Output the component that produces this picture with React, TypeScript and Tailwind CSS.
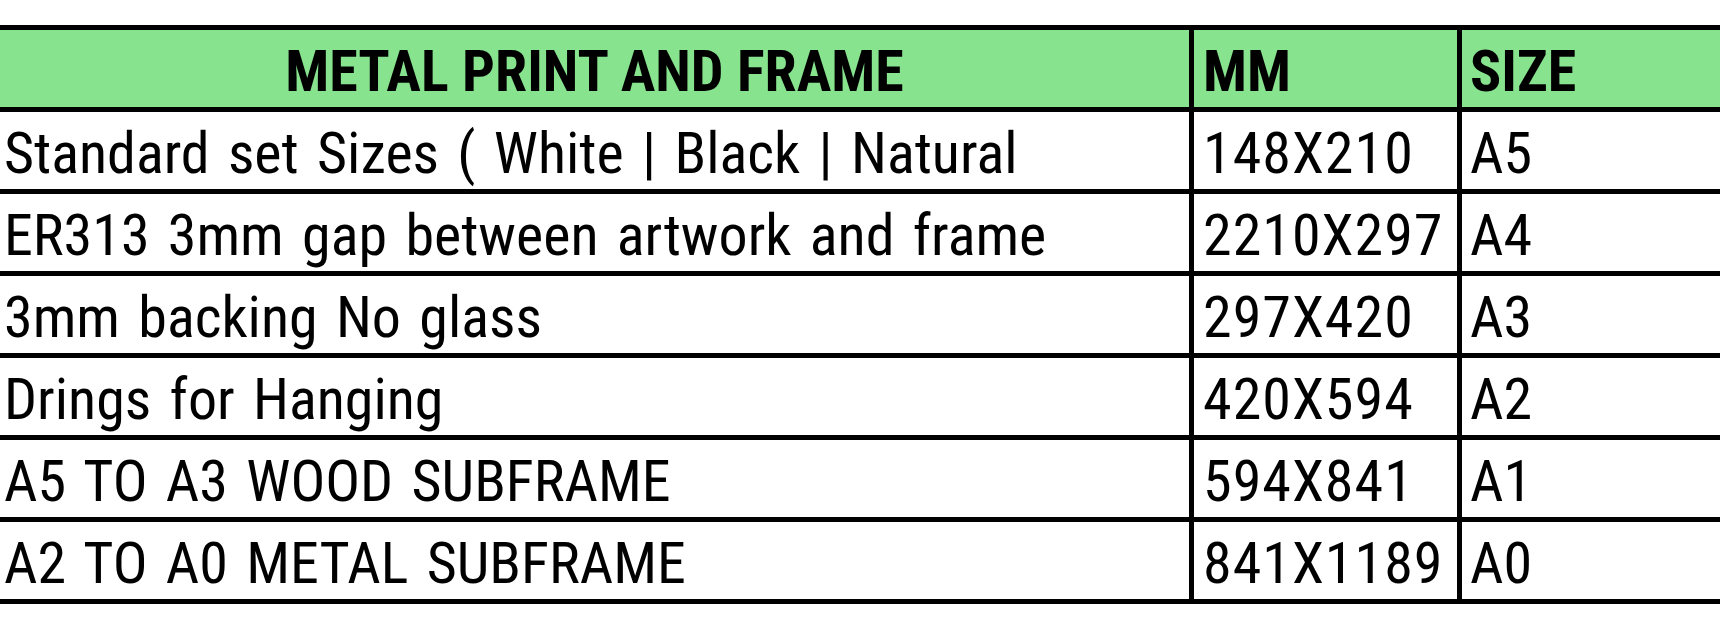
const rows: [string, string, string][] = [
  ["Standard set Sizes ( White | Black | Natural", "148X210", "A5"],
  ["ER313 3mm gap between artwork and frame", "2210X297", "A4"],
  ["3mm backing No glass", "297X420", "A3"],
  ["Drings for Hanging", "420X594", "A2"],
  ["A5 TO A3 WOOD SUBFRAME", "594X841", "A1"],
  ["A2 TO A0 METAL SUBFRAME", "841X1189", "A0"],
];

export default function App() {
  return (
    <div className="w-[1720px] h-[642px] bg-white overflow-hidden pt-[25px] font-['Roboto',sans-serif] text-black">
      <div className="border-t-[5px] border-black">
        <div className="grid grid-cols-[1189px_268px_1fr] border-b-[5px] border-black bg-[#87e38e] h-[82px] font-bold text-[58px] [font-stretch:80%] leading-[72px]">
          <div className="pt-[5px] text-center whitespace-nowrap">METAL PRINT AND FRAME</div>
          <div className="border-l-[5px] border-black pt-[5px] pl-[9px] whitespace-nowrap">MM</div>
          <div className="border-l-[5px] border-black pt-[5px] pl-[8px] whitespace-nowrap">SIZE</div>
        </div>
        {rows.map(([a, b, c], i) => (
          <div
            key={i}
            className="grid grid-cols-[1189px_268px_1fr] border-b-[5px] border-black h-[82px] text-[58px] [font-stretch:81%] leading-[72px]"
          >
            <div className="pt-[5px] pl-[4px] whitespace-nowrap [word-spacing:5px]">{a}</div>
            <div className="border-l-[5px] border-black pt-[5px] pl-[9px] whitespace-nowrap tracking-[1px]">{b}</div>
            <div className="border-l-[5px] border-black pt-[5px] pl-[8px] whitespace-nowrap">{c}</div>
          </div>
        ))}
      </div>
    </div>
  );
}
